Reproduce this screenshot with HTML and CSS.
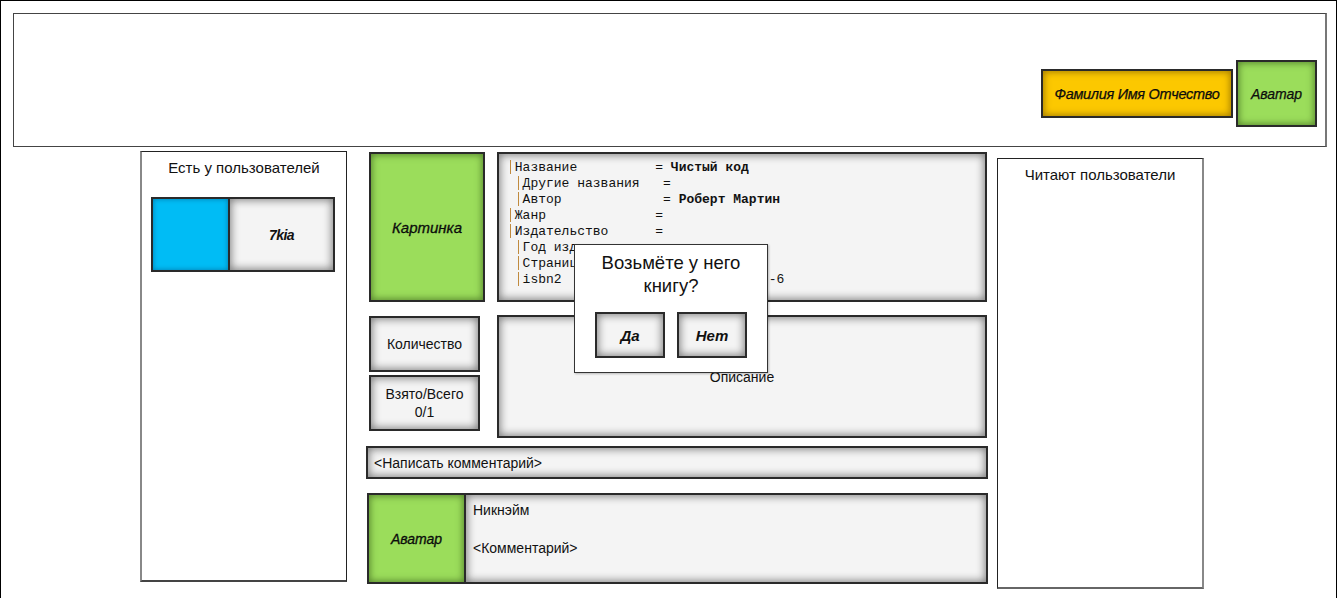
FILE: index.html
```html
<!DOCTYPE html>
<html lang="ru">
<head>
<meta charset="utf-8">
<title>Книга</title>
<link rel="stylesheet" href="styles.css">
</head>
<body>
<div class="page">
  <header class="header">
    <div class="fio box-yellow">Фамилия Имя Отчество</div>
    <div class="top-avatar box-green">Аватар</div>
  </header>
  <main class="main">
    <aside class="panel panel-left">
      <div class="panel-title">Есть у пользователей</div>
      <div class="owner">
        <div class="owner-pic box-blue"></div>
        <div class="owner-name box-gray">7kia</div>
      </div>
    </aside>
    <section class="middle">
      <div class="row-top">
        <div class="pic box-green">Картинка</div>
        <div class="info box-gray">
          <div class="ln"><span class="bar"></span>Название          = <b>Чистый код</b></div>
          <div class="ln"> <span class="bar"></span>Другие названия   =</div>
          <div class="ln"> <span class="bar"></span>Автор             = <b>Роберт Мартин</b></div>
          <div class="ln"><span class="bar"></span>Жанр              =</div>
          <div class="ln"><span class="bar"></span>Издательство      =</div>
          <div class="ln"> <span class="bar"></span>Год издания</div>
          <div class="ln"> <span class="bar"></span>Страниц</div>
          <div class="ln"> <span class="bar"></span>isbn2<span class="tail">-6</span></div>
        </div>
      </div>
      <div class="row-mid">
        <div class="stats">
          <div class="stat box-gray">Количество</div>
          <div class="stat box-gray">Взято/Всего<br>0/1</div>
        </div>
        <div class="desc box-gray">Описание</div>
      </div>
      <div class="cinput box-gray">&lt;Написать комментарий&gt;</div>
      <div class="comment">
        <div class="c-avatar box-green">Аватар</div>
        <div class="c-body box-gray">
          <div class="c-nick">Никнэйм</div>
          <div class="c-text">&lt;Комментарий&gt;</div>
        </div>
      </div>
      <div class="popup">
        <div class="popup-q">Возьмёте у него книгу?</div>
        <div class="popup-btns">
          <div class="pbtn box-gray">Да</div>
          <div class="pbtn box-gray">Нет</div>
        </div>
      </div>
    </section>
    <aside class="panel panel-right">
      <div class="panel-title">Читают пользователи</div>
    </aside>
  </main>
</div>
</body>
</html>
```
FILE: styles.css
```css
* { box-sizing: border-box; }
html, body { margin: 0; padding: 0; background: #fff; }
body {
  font-family: "Liberation Sans", Arial, sans-serif;
  color: #111;
}
.page {
  width: 1337px;
  height: 598px;
  border: 1px solid #000;
  border-bottom: none;
}
.header {
  margin: 12px 9px 0 12px;
  height: 134px;
  border: 1px solid #444;
  border-right: 2px solid #777;
  display: flex;
  justify-content: flex-end;
  align-items: center;
  gap: 3px;
  padding: 27px 8px 0 0;
}
.box-yellow, .box-green, .box-blue, .box-gray {
  border: 2px solid #2a2a2a;
}
.box-yellow {
  background: #fcc800;
  box-shadow: inset 0 0 7px 1px rgba(90, 60, 0, 0.55);
}
.box-green {
  background: #9bdd5b;
  box-shadow: inset 0 0 7px 1px rgba(30, 60, 10, 0.55);
}
.box-blue {
  background: #00bcf5;
  box-shadow: inset 0 0 5px rgba(0, 40, 80, 0.45);
}
.box-gray {
  background: #f4f4f4;
  box-shadow: inset 0 0 8px 1px rgba(0, 0, 0, 0.5);
}
.fio {
  width: 192px;
  height: 49px;
  display: flex;
  align-items: center;
  justify-content: center;
  font-style: italic;
  font-size: 14.5px;
  letter-spacing: -0.3px;
  -webkit-text-stroke: 0.25px #000;
}
.top-avatar {
  width: 81px;
  height: 67px;
  display: flex;
  align-items: center;
  justify-content: center;
  font-style: italic;
  font-size: 14px;
  -webkit-text-stroke: 0.25px #000;
}
.main {
  display: flex;
  align-items: flex-start;
  margin-top: 4px;
  padding-left: 139px;
}
.panel {
  width: 207px;
  height: 431px;
  border: 1px solid #222;
  background: #fff;
}
.panel-left {
  border-left: 2px solid #888;
  border-bottom: 2px solid #444;
}
.panel-right {
  margin-left: 9px;
  margin-top: 7px;
  border-right: 2px solid #888;
  border-bottom: 2px solid #666;
}
.panel-title {
  text-align: center;
  font-size: 15px;
  padding-top: 7px;
  line-height: 18px;
}
.owner {
  display: flex;
  margin: 20px 0 0 9px;
}
.owner-pic {
  width: 79px;
  height: 75px;
}
.owner-name {
  width: 105px;
  height: 75px;
  border-left: none;
  display: flex;
  align-items: center;
  justify-content: center;
  font-style: italic;
  font-weight: bold;
  font-size: 14px;
  letter-spacing: -0.5px;
}
.middle {
  position: relative;
  width: 622px;
  margin-left: 19px;
}
.row-top {
  display: flex;
  padding-left: 3px;
  padding-right: 1px;
  justify-content: space-between;
  margin-top: 1px;
}
.pic {
  width: 116px;
  height: 150px;
  display: flex;
  align-items: center;
  justify-content: center;
  font-style: italic;
  font-size: 15px;
  -webkit-text-stroke: 0.3px #000;
}
.info {
  width: 490px;
  height: 150px;
  padding: 6px 0 0 8px;
  font-family: "Liberation Mono", "Courier New", monospace;
  font-size: 13px;
  line-height: 16px;
  overflow: hidden;
}
.ln { white-space: pre; height: 16px; }
.info b { font-weight: bold; }
.tail { margin-left: 207px; }
.bar {
  display: inline-block;
  width: 7.8px;
  height: 14px;
  vertical-align: -3px;
  background: linear-gradient(#c08a3e, #c08a3e) 3px 0 / 1px 14px no-repeat;
}
.row-mid {
  display: flex;
  justify-content: space-between;
  padding-left: 3px;
  padding-right: 1px;
  margin-top: 13px;
}
.stats {
  display: flex;
  flex-direction: column;
  gap: 3px;
  padding-top: 1px;
}
.stat {
  width: 111px;
  height: 56px;
  display: flex;
  align-items: center;
  justify-content: center;
  text-align: center;
  font-size: 14px;
  line-height: 18px;
}
.desc {
  width: 490px;
  height: 123px;
  display: flex;
  align-items: center;
  justify-content: center;
  font-size: 14px;
}
.cinput {
  margin-top: 8px;
  height: 33px;
  font-size: 14px;
  display: flex;
  align-items: center;
  padding-left: 6px;
}
.comment {
  display: flex;
  margin-top: 14px;
  padding-left: 1px;
  height: 91px;
}
.c-avatar {
  width: 99px;
  height: 91px;
  display: flex;
  align-items: center;
  justify-content: center;
  font-style: italic;
  font-size: 14px;
  -webkit-text-stroke: 0.3px #000;
}
.c-body {
  flex: 1;
  height: 91px;
  border-left: none;
  font-size: 14px;
  padding: 6px 0 0 7px;
  line-height: 18px;
}
.c-text { margin-top: 20px; }
.popup {
  position: absolute;
  left: 208px;
  top: 93px;
  width: 194px;
  height: 129px;
  background: #fff;
  border: 1px solid #333;
  box-shadow: 1px 1px 2px rgba(0, 0, 0, 0.25);
  text-align: center;
}
.popup-q {
  font-size: 18.5px;
  line-height: 23px;
  padding: 6px 10px 0;
}
.popup-btns {
  display: flex;
  justify-content: center;
  gap: 12px;
  margin-top: 15px;
}
.pbtn {
  width: 70px;
  height: 46px;
  display: flex;
  align-items: center;
  justify-content: center;
  font-style: italic;
  font-weight: bold;
  font-size: 15px;
}
```
